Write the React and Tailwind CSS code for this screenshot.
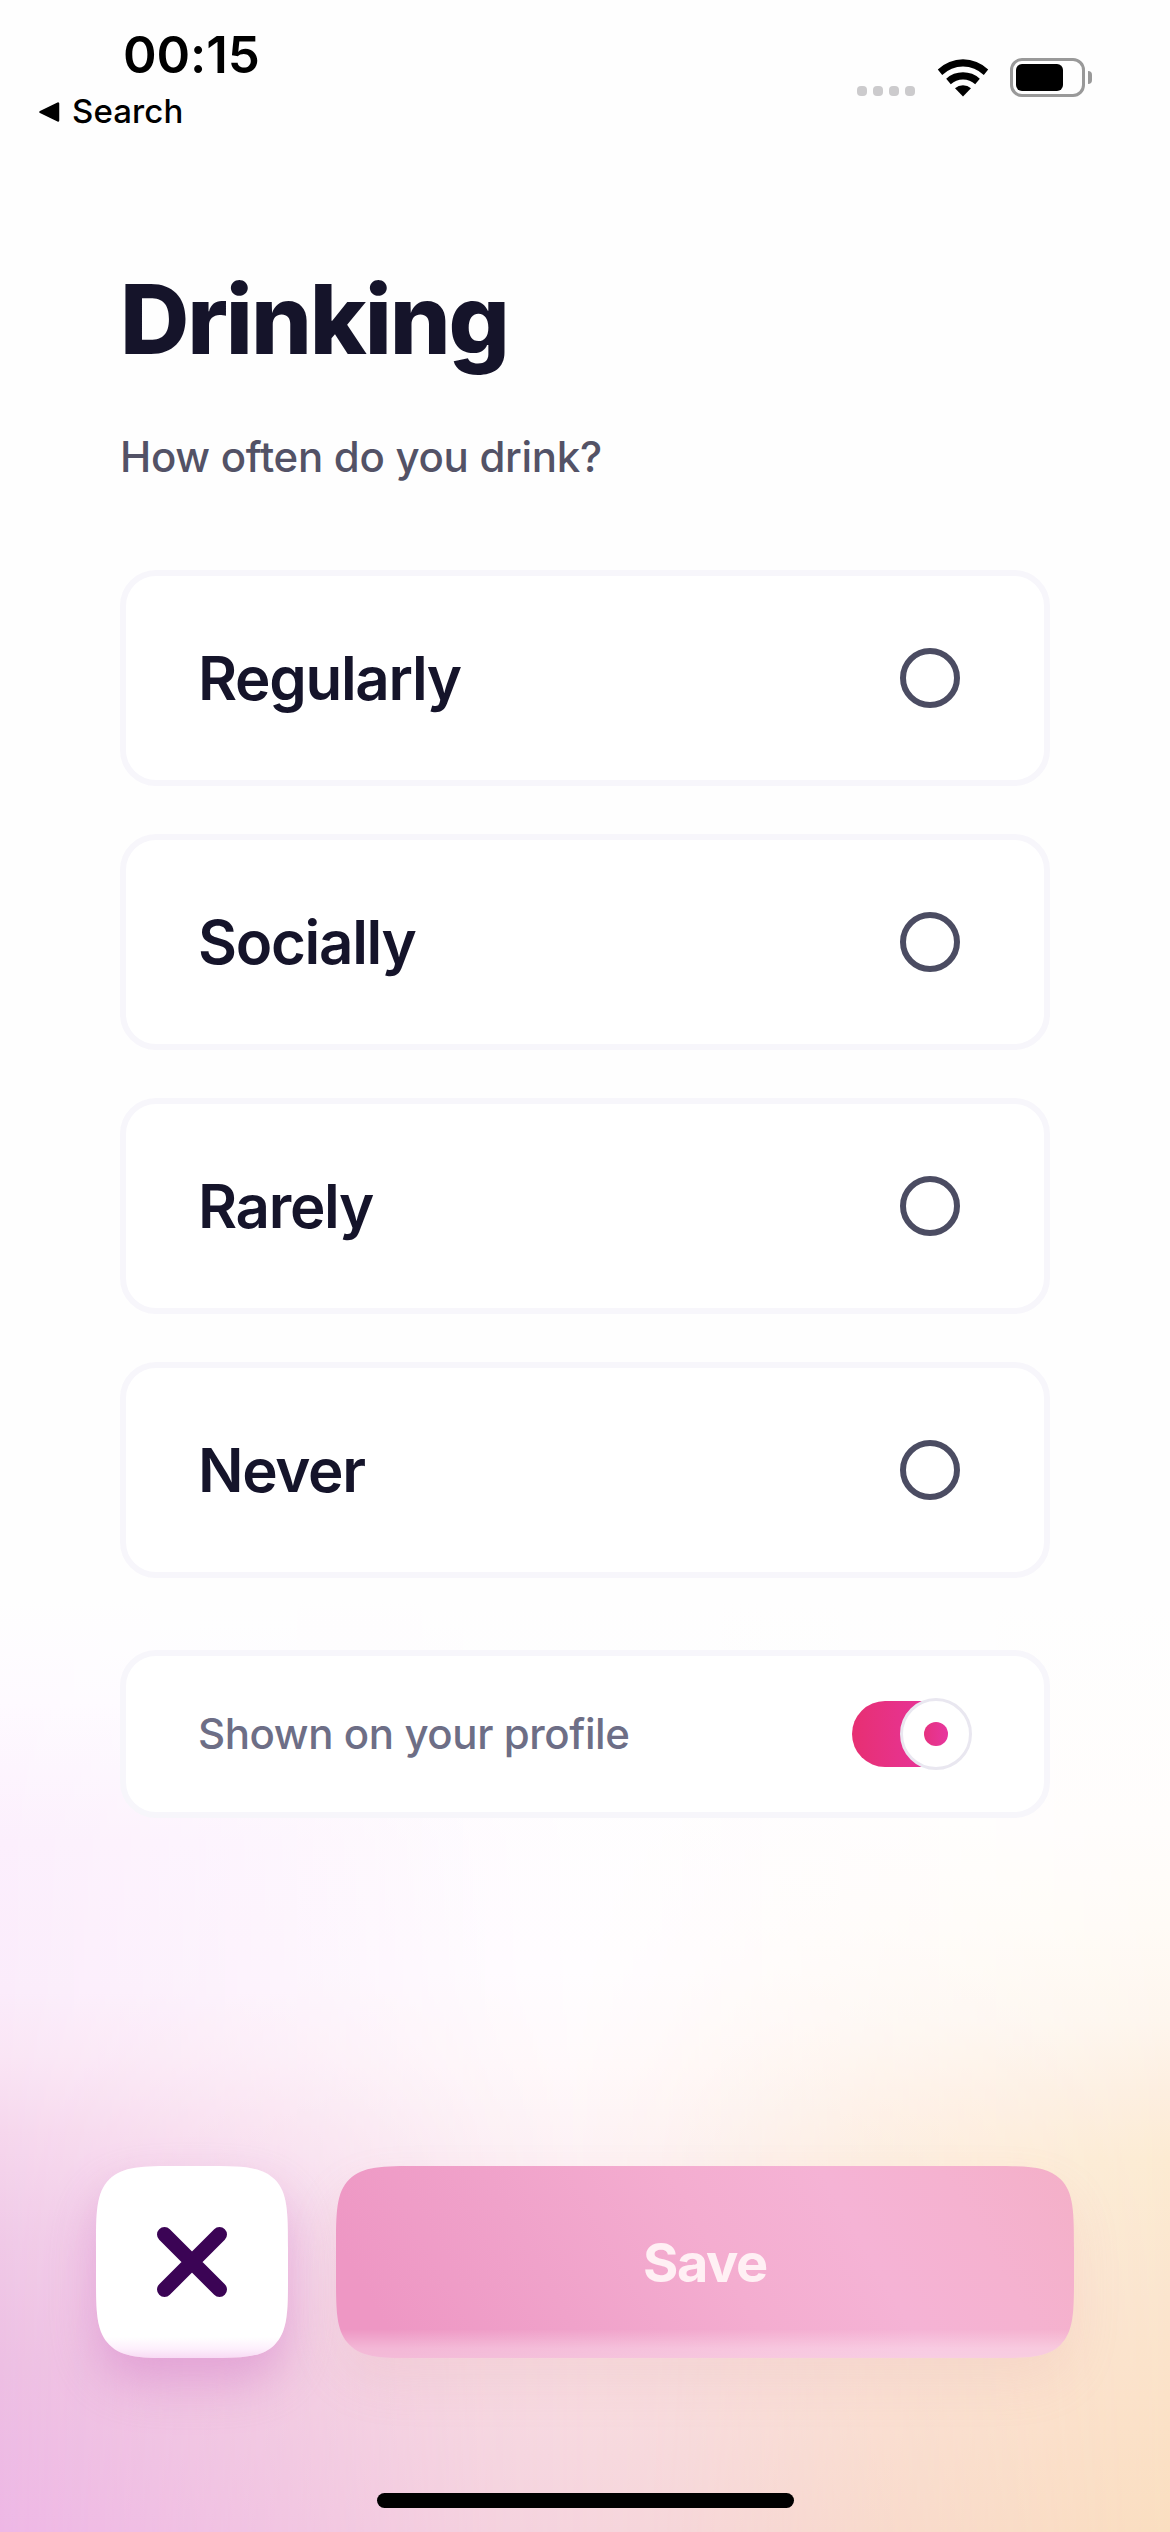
import { useState } from 'react';

const options = ['Regularly', 'Socially', 'Rarely', 'Never'];

const cardClass =
    'flex items-center justify-between w-full border-6 border-[#f7f6fb] rounded-[36px] bg-white pl-[72px]';

function StatusBar() {
    return (
        <header className="flex justify-between h-[144px] pl-[38px] pr-[78px] text-black">
            <div>
                <p className="pl-[85px] mt-[25px] h-[60px] leading-[60px] text-[51px] font-semibold tracking-[-0.1px]">
                    00:15
                </p>
                <div className="flex items-center h-[54px] gap-[12px]">
                    <svg width="22" height="22" viewBox="0 0 22 22">
                        <path
                            d="M2.5 11 20 2.500v17z"
                            fill="currentColor"
                            stroke="currentColor"
                            strokeWidth="2.5"
                            strokeLinejoin="round"
                        />
                    </svg>
                    <span className="text-[33px] font-medium tracking-[0.1px]">Search</span>
                </div>
            </div>
            <div className="flex items-start pt-[58px]">
                <div className="flex gap-1.5 mt-7 mr-[22px]">
                    {[0, 1, 2, 3].map(i => (
                        <span key={i} className="size-2.5 rounded-[4px] bg-[#cccbcd]" />
                    ))}
                </div>
                <svg className="mr-[21px]" width="52" height="39" viewBox="0 0 52 39" fill="currentColor">
                    <path d="M.8 11.400a36.500 36.500 0 0 1 50.400 0L46.800 17a30 30 0 0 0-41.600 0z" />
                    <path d="M9.200 20.800a24.500 24.500 0 0 1 33.600 0L38.200 26.200a18 18 0 0 0-24.400 0z" />
                    <path d="M18 30.300a12 12 0 0 1 16 0L26 38.400z" />
                </svg>
                <div className="flex items-center">
                    <div className="w-[75px] h-[39px] p-[3px] border-3 border-[#999] rounded-[12px]">
                        <div className="w-[47px] h-[27px] rounded-[6px] bg-black" />
                    </div>
                    <div className="ml-[3px] w-1 h-[13px] rounded-r-full bg-[#999]" />
                </div>
            </div>
        </header>
    );
}

// Pink glow on the left, peach on the right, both fading into the middle layer
function Backdrop() {
    return (
        <div className="absolute inset-x-0 bottom-0 h-[932px] -z-10 bg-[linear-gradient(180deg,#fefefe_0%,#fffdff_40%,#fffafb_50%,#fdf2f5_60%,#fae5eb_72%,#f8dde2_83%,#f6d5de_100%)]">
            <div className="absolute inset-0 bg-[linear-gradient(180deg,#fefefe_0%,#fefaff_11%,#fceffd_26%,#fbecfb_42%,#fae5f5_49%,#f6d7ed_57%,#f0c9e7_69%,#edbfe3_82%,#eeb7e5_100%)] [mask-image:linear-gradient(90deg,#000_0%,#00000088_24%,#0000001c_42%,transparent_50%)]" />
            <div className="absolute inset-0 bg-[linear-gradient(180deg,#fefefe_0%,#fffdfc_24%,#fffbf6_35%,#fef6ee_45%,#fdeedf_53%,#fcebd2_60%,#fbe5ce_75%,#fbe1c6_89%,#fadec0_100%)] [mask-image:linear-gradient(270deg,#000_0%,#00000094_25%,#0000001c_44%,transparent_52%)]" />
        </div>
    );
}

function Toggle({ on, onChange }) {
    return (
        <button
            type="button"
            role="switch"
            aria-checked={on}
            onClick={() => onChange(!on)}
            className="flex items-center w-[120px] h-[72px] mr-[72px]"
        >
            <span className="w-[84px] h-[66px] rounded-l-full bg-linear-to-r from-[#e72f72] to-[#e7339c]" />
            <span className="-ml-9 flex items-center justify-center size-[72px] shrink-0 rounded-full border-3 border-[#e9e7f0] bg-white">
                <span className="size-6 rounded-full bg-linear-to-r from-[#e6317f] to-[#e7369f]" />
            </span>
        </button>
    );
}

export default function App() {
    const [selected, setSelected] = useState(null);
    const [shown, setShown] = useState(true);

    return (
        <div className="relative isolate flex flex-col w-[1170px] h-[2532px] overflow-hidden bg-[#fefefe] font-['Inter',sans-serif]">
            <Backdrop />
            <StatusBar />

            <main className="px-[120px] pt-[117px]">
                <h1 className="h-[116px] leading-[116px] text-[96px] font-extrabold tracking-[-2.100px] text-[#15142a]">
                    Drinking
                </h1>
                <p className="mt-[53px] h-[54px] leading-[54px] text-[42px] font-medium tracking-[-0.3px] text-[#535266]">
                    How often do you drink?
                </p>

                <ul className="mt-[86px] space-y-12">
                    {options.map(o => (
                        <li key={o}>
                            <button
                                type="button"
                                onClick={() => setSelected(o)}
                                className={`${cardClass} h-[216px] pr-[84px]`}
                            >
                                <span className="text-[60px] font-semibold tracking-[-1.300px] text-[#15142a]">
                                    {o}
                                </span>
                                <span className="flex items-center justify-center size-[60px] rounded-full border-6 border-[#4b4c62]">
                                    {selected === o && <span className="size-6 rounded-full bg-[#e6317f]" />}
                                </span>
                            </button>
                        </li>
                    ))}
                </ul>

                <div className={`${cardClass} mt-[72px] h-[168px]`}>
                    <span className="pb-0.5 text-[42px] font-medium tracking-[-0.420px] text-[#6d6e86]">
                        Shown on your profile
                    </span>
                    <Toggle on={shown} onChange={setShown} />
                </div>
            </main>

            <footer className="mt-auto px-24">
                <div className="flex gap-12">
                    <button
                        type="button"
                        aria-label="Close"
                        className="flex items-center justify-center size-48 rounded-[84px] [corner-shape:squircle] bg-[linear-gradient(180deg,#fff_89%,#fdf0fc_95%,#f8daf4_100%)] shadow-[0_24px_48px_#d070c470]"
                    >
                        <svg width="70" height="70" viewBox="0 0 70 70" stroke="#3b0455" strokeWidth="15" strokeLinecap="round">
                            <path d="M7.500 7.500l55 55M62.500 7.500l-55 55" />
                        </svg>
                    </button>
                    <button
                        type="button"
                        className="flex-1 h-48 rounded-[84px] [corner-shape:squircle] bg-[linear-gradient(180deg,#fff0_85%,#ffffff50_95%,#ffffff58_100%),linear-gradient(60deg,#ee97c4_8%,#f0a2ca_30%,#f4add0_52%,#f5b3d5_70%,#f5b2d0_84%,#f4b0c8_100%)] shadow-[0_24px_48px_#e0a0a028] text-[54px] font-bold tracking-[-1.400px] text-[#fff0f4]"
                    >
                        Save
                    </button>
                </div>
                <div className="mx-auto mt-[135px] mb-6 w-[417px] h-[15px] rounded-full bg-black" />
            </footer>
        </div>
    );
}
